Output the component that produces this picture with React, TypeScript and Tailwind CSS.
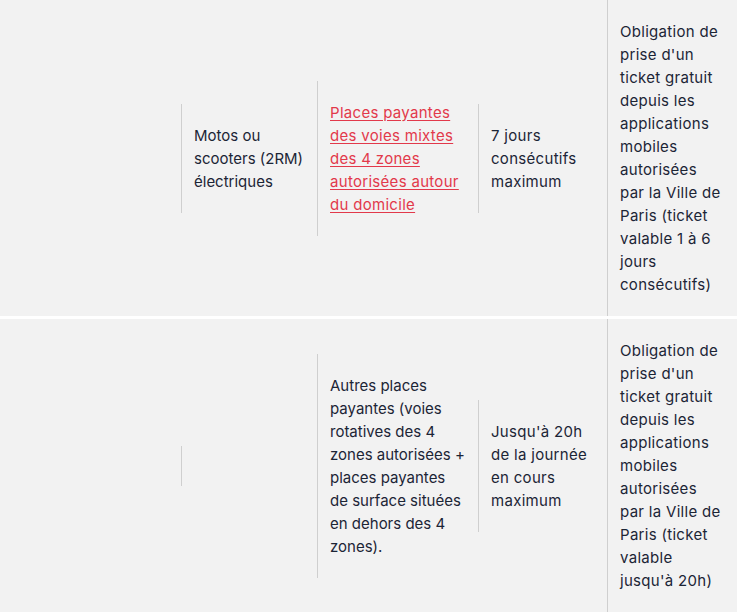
import React from "react";

type Cell = { text?: string; link?: boolean; wide?: boolean };

const rows: Cell[][] = [
  [
    {},
    { text: "Motos ou scooters (2RM) électriques" },
    { text: "Places payantes des voies mixtes des 4 zones autorisées autour du domicile", link: true, wide: true },
    { text: "7 jours consécutifs maximum", wide: true },
    {
      text:
        "Obligation de prise d'un ticket gratuit depuis les applications mobiles autorisées par la Ville de Paris (ticket valable 1 à 6 jours consécutifs)",
      wide: true,
    },
  ],
  [
    {},
    {},
    {
      text:
        "Autres places payantes (voies rotatives des 4 zones autorisées + places payantes de surface situées en dehors des 4 zones).",
    },
    { text: "Jusqu'à 20h de la journée en cours maximum", wide: true },
    {
      text:
        "Obligation de prise d'un ticket gratuit depuis les applications mobiles autorisées par la Ville de Paris (ticket valable jusqu'à 20h)",
      wide: true,
    },
  ],
];

const widths = ["w-[181px]", "w-[136px]", "w-[161px]", "w-[129px]", "w-[130px]"];

export default function App() {
  return (
    <div
      className="w-[737px] h-[612px] overflow-hidden bg-white text-[15px] leading-[23px] text-[#1c2536]"
      style={{ fontFamily: "Inter, 'Noto Sans', sans-serif" }}
    >
      <div className="flex flex-col gap-[3px]">
        {rows.map((row, ri) => (
          <div key={ri} className="flex items-center bg-[#f2f2f2]">
            {row.map((c, ci) =>
              ci === 0 ? (
                <div key={ci} className={`${widths[0]} shrink-0`} />
              ) : (
                <div
                  key={ci}
                  className={`${widths[ci]} shrink-0 border-l border-[#cfcfcf] py-5 pl-[12px] pr-[12px] ${
                    c.wide ? "tracking-[0.3px]" : "tracking-normal"
                  }`}
                >
                  {c.text ? (
                    c.link ? (
                      <a className="text-[#e2394b] underline underline-offset-2">{c.text}</a>
                    ) : (
                      <span>{c.text}</span>
                    )
                  ) : null}
                </div>
              )
            )}
          </div>
        ))}
      </div>
    </div>
  );
}
